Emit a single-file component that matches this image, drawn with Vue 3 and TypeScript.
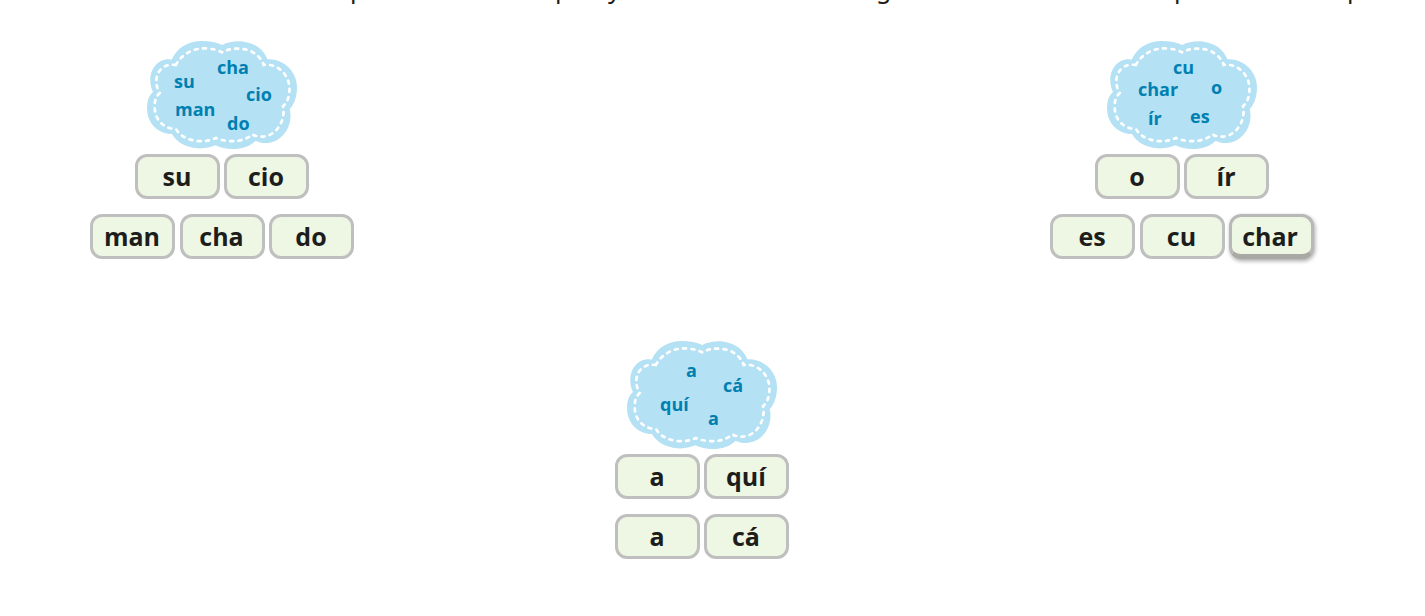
<script setup lang="ts">
interface Label { text: string; x: number; y: number }
interface Tile { text: string; raised?: boolean }
interface Group { id: string; labels: Label[]; rows: Tile[][] }

const groups: Group[] = [
  {
    id: 'first',
    labels: [
      { text: 'su', x: 27, y: 47 },
      { text: 'cha', x: 70, y: 33 },
      { text: 'cio', x: 99, y: 60 },
      { text: 'man', x: 28, y: 75 },
      { text: 'do', x: 80, y: 89 },
    ],
    rows: [
      [{ text: 'su' }, { text: 'cio' }],
      [{ text: 'man' }, { text: 'cha' }, { text: 'do' }],
    ],
  },
  {
    id: 'second',
    labels: [
      { text: 'cu', x: 66, y: 33 },
      { text: 'char', x: 31, y: 55 },
      { text: 'o', x: 104, y: 53 },
      { text: 'ír', x: 41, y: 84 },
      { text: 'es', x: 83, y: 82 },
    ],
    rows: [
      [{ text: 'o' }, { text: 'ír' }],
      [{ text: 'es' }, { text: 'cu' }, { text: 'char', raised: true }],
    ],
  },
  {
    id: 'third',
    labels: [
      { text: 'a', x: 59, y: 36 },
      { text: 'cá', x: 96, y: 51 },
      { text: 'quí', x: 33, y: 70 },
      { text: 'a', x: 81, y: 84 },
    ],
    rows: [
      [{ text: 'a' }, { text: 'quí' }],
      [{ text: 'a' }, { text: 'cá' }],
    ],
  },
]

const letters = ['p', 'p', 'y', 'g', 'p', 'p']
</script>

<template>
  <div class="page">
    <p class="intro"><span v-for="(l, i) in letters" :key="i">{{ l }}</span></p>
    <main class="board">
      <section v-for="g in groups" :key="g.id" class="group" :class="g.id">
        <svg class="cloud" viewBox="0 0 150 108">
          <g transform="scale(0.33333) translate(-21 -21)">
            <path
              class="shape"
              d="M95 77C112 40 145 21 185 21C210 21 230 25 247 33C265 23 290 20 312 23C348 29 372 48 382 76C430 73 471 112 471 160C471 189 463 210 449 226C461 270 430 327 376 327C365 327 356 324 347 320C330 337 305 345 278 345C258 345 240 341 226 334C210 341 193 344 172 343C138 340 110 325 96 300C54 300 21 268 21 222C21 200 27 184 39 174C16 128 44 68 95 77Z"
            />
            <path
              class="stitch"
              d="M107 93C127 58 164 39 205 44C222 45 236 50 247 55C265 44 291 41 319 47C345 54 363 70 371 93C410 87 445 119 448 158C450 182 444 203 429 217C439 264 402 315 357 307C350 307 343 305 337 301C319 317 296 323 268 321C253 320 239 318 228 312C211 320 193 323 171 321C142 317 119 305 108 285C70 284 43 257 44 216C44 199 49 187 59 177C34 134 58 85 107 93Z"
            />
          </g>
          <text v-for="(t, i) in g.labels" :key="i" :x="t.x" :y="t.y">{{ t.text }}</text>
        </svg>
        <div v-for="(row, r) in g.rows" :key="r" class="row" :class="{ wide: row.length === 3 }">
          <button
            v-for="(t, i) in row"
            :key="i"
            type="button"
            class="tile"
            :class="{ raised: t.raised }"
          >{{ t.text }}</button>
        </div>
      </section>
    </main>
  </div>
</template>

<style>
body {
  margin: 0;
  background: #fff;
}
</style>

<style scoped>
.page {
  overflow: hidden;
  font-family: "Noto Sans", "Open Sans", sans-serif;
  color: #1d1d1b;
}
.intro {
  display: grid;
  grid-template-columns: 205fr 53fr 268fr 298fr 173fr 78fr;
  height: 26px;
  margin: -25px 0 0;
  padding-left: 350px;
  font-size: 25px;
  line-height: 26px;
}
.board {
  display: grid;
  grid-template-columns: repeat(3, 1fr);
  row-gap: 82px;
  margin: 40px 3px 0 -18px;
}
.group {
  display: flex;
  flex-direction: column;
  align-items: center;
}
.first { grid-area: 1 / 1; }
.second { grid-area: 1 / 3; }
.third { grid-area: 2 / 2; }
.cloud {
  display: block;
  width: 150px;
  height: 108px;
  margin-bottom: 5px;
}
.shape { fill: #b5e1f4; }
.stitch {
  fill: none;
  stroke: #fff;
  stroke-width: 8;
  stroke-linecap: round;
  stroke-dasharray: 9 16;
}
.cloud text {
  fill: #0080b0;
  font-family: "Open Sans", "Noto Sans", sans-serif;
  font-size: 18px;
  font-weight: 700;
}
.row {
  display: flex;
  justify-content: space-between;
  width: 174px;
  margin-bottom: 15px;
}
.row.wide { width: 264px; }
.row:last-child { margin-bottom: 0; }
.tile {
  box-sizing: border-box;
  width: 85px;
  height: 45px;
  padding: 0 1px 2px 0;
  border: 3px solid #bfbfbf;
  border-radius: 12px;
  background: #eef7e4;
  color: #1d1d1b;
  font: 700 25px/36px "Open Sans", "Noto Sans", sans-serif;
  cursor: grab;
}
.tile.raised {
  padding: 0 3px 0 0;
  border-color: #b8b8b6;
  border-bottom: 5px solid #a8a8a4;
  box-shadow: 1px 2px 4px rgba(0, 0, 0, 0.35);
}
</style>
